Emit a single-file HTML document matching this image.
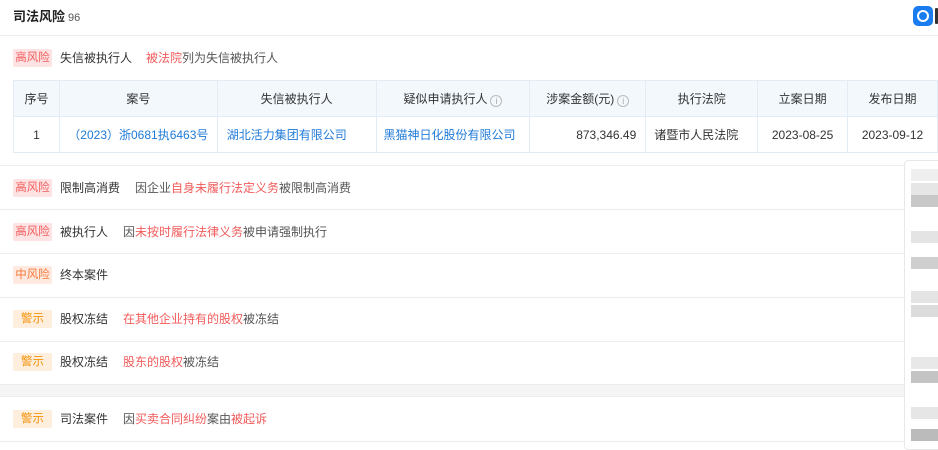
<!DOCTYPE html>
<html><head><meta charset="utf-8"><style>
*{margin:0;padding:0;box-sizing:border-box}
body{width:938px;height:444px;overflow:hidden;background:#fff;font-family:"Liberation Sans","Noto Sans CJK SC",sans-serif;font-size:12px;color:#333;position:relative}
.title{position:absolute;left:13px;top:8px;font-size:13px;font-weight:bold;color:#222;line-height:18px}
.title span{font-weight:normal;font-size:11px;color:#555;margin-left:3px}
.hl{position:absolute;left:0;right:0;height:1px;background:#ececec}
.row{position:absolute;left:0;width:904px;height:20px;line-height:20px;white-space:nowrap}
.row>div{position:absolute;top:0;height:20px;line-height:20px}
.tag{left:13px;width:39px;top:1px!important;height:18px!important;line-height:18px!important;text-align:center;font-size:11.5px;border-radius:2px}
.h{background:#fde3e3;color:#f25b5b}
.m{background:#feeae0;color:#f5793a}
.w{background:#fdeedd;color:#f7930a}
.lab{left:60px;color:#333;font-size:12px}
.desc{color:#555;font-size:12px}
.r{color:#f25b5b}
table{position:absolute;left:13px;top:80px;border-collapse:collapse;table-layout:fixed}
td,th{border:1px solid #e3ecf4;height:36px;font-weight:normal;text-align:center;font-size:12px}
th{background:#f2f8fc;color:#333}
td{color:#333}
a{color:#1f7ad8;text-decoration:none}
.i{display:inline-block;width:12px;height:12px;border:1px solid #bbb;border-radius:50%;font-size:9px;line-height:10px;color:#aaa;vertical-align:-1px;margin-left:3px;text-align:center}
.panel{position:absolute;left:904px;top:160px;width:40px;height:290px;border:1px solid #e8e8e8;border-radius:4px;background:#fff}
.px{position:absolute;left:6px;width:28px;height:12px}
</style></head><body>
<div class="title">司法风险<span>96</span></div>
<div style="position:absolute;left:913px;top:6px;width:20px;height:20px;border-radius:5px;background:#1b7cf0"><div style="position:absolute;left:4px;top:4px;width:12px;height:12px;border:2px solid #fff;border-radius:50%"></div></div>
<div style="position:absolute;left:935px;top:8px;width:3px;height:16px;background:#333;border-radius:1px"></div>
<div class="hl" style="top:35px"></div>
<div class="row" style="top:48px"><div class="tag h">高风险</div><div class="lab">失信被执行人</div><div class="desc" style="left:146px"><span class="r">被法院</span>列为失信被执行人</div></div>
<table>
<colgroup><col style="width:46px"><col style="width:158px"><col style="width:159px"><col style="width:154px"><col style="width:116px"><col style="width:112px"><col style="width:90px"><col style="width:90px"></colgroup>
<tr><th>序号</th><th>案号</th><th>失信被执行人</th><th>疑似申请执行人<span class="i">i</span></th><th>涉案金额(元)<span class="i">i</span></th><th>执行法院</th><th>立案日期</th><th>发布日期</th></tr>
<tr><td>1</td><td><a>（2023）浙0681执6463号</a></td><td style="text-align:left;padding-left:9px"><a>湖北活力集团有限公司</a></td><td style="text-align:left;padding-left:7px"><a>黑猫神日化股份有限公司</a></td><td style="text-align:right;padding-right:9px">873,346.49</td><td style="text-align:left;padding-left:8px">诸暨市人民法院</td><td>2023-08-25</td><td>2023-09-12</td></tr>
</table>
<div class="hl" style="top:165px;width:904px"></div>
<div class="row" style="top:178px"><div class="tag h">高风险</div><div class="lab">限制高消费</div><div class="desc" style="left:135px">因企业<span class="r">自身未履行法定义务</span>被限制高消费</div></div>
<div class="hl" style="top:209px;width:904px"></div>
<div class="row" style="top:222px"><div class="tag h">高风险</div><div class="lab">被执行人</div><div class="desc" style="left:123px">因<span class="r">未按时履行法律义务</span>被申请强制执行</div></div>
<div class="hl" style="top:253px;width:904px"></div>
<div class="row" style="top:265px"><div class="tag m">中风险</div><div class="lab">终本案件</div></div>
<div class="hl" style="top:297px;width:904px"></div>
<div class="row" style="top:309px"><div class="tag w">警示</div><div class="lab">股权冻结</div><div class="desc" style="left:123px"><span class="r">在其他企业持有的股权</span>被冻结</div></div>
<div class="hl" style="top:341px;width:904px"></div>
<div class="row" style="top:352px"><div class="tag w">警示</div><div class="lab">股权冻结</div><div class="desc" style="left:123px"><span class="r">股东的股权</span>被冻结</div></div>
<div style="position:absolute;left:0;top:384px;width:904px;height:13px;background:#f5f5f5;border-top:1px solid #ececec;border-bottom:1px solid #ececec"></div>
<div class="row" style="top:409px"><div class="tag w">警示</div><div class="lab">司法案件</div><div class="desc" style="left:123px">因<span class="r">买卖合同纠纷</span>案由<span class="r">被起诉</span></div></div>
<div class="hl" style="top:441px;width:904px"></div>
<div class="panel">
<div class="px" style="top:8px;background:#efefef"></div>
<div class="px" style="top:22px;background:#e6e6e6"></div>
<div class="px" style="top:34px;background:#c8c8c8"></div>
<div class="px" style="top:70px;background:#e4e4e4"></div>
<div class="px" style="top:96px;background:#cfcfcf"></div>
<div class="px" style="top:130px;background:#e4e4e4"></div>
<div class="px" style="top:144px;background:#dcdcdc"></div>
<div class="px" style="top:196px;background:#e8e8e8"></div>
<div class="px" style="top:210px;background:#c4c4c4"></div>
<div class="px" style="top:246px;background:#e6e6e6"></div>
<div class="px" style="top:268px;background:#bbb"></div>
</div>
</body></html>
